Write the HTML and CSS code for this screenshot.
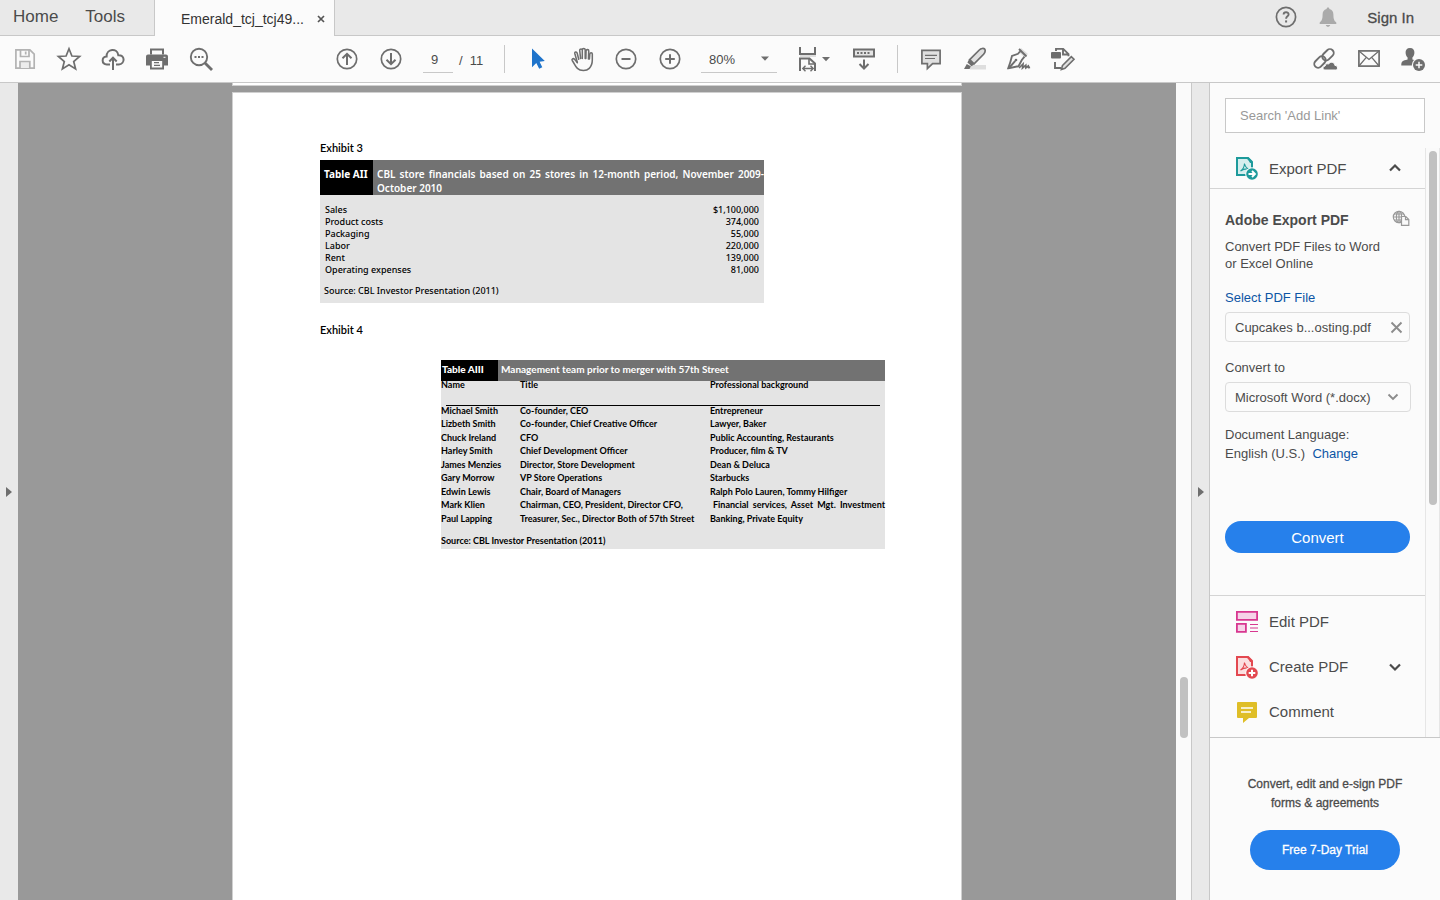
FILE: index.html
```html
<!DOCTYPE html>
<html lang="en">
<head>
    <meta charset="UTF-8">
    <meta name="viewport" content="width=device-width, initial-scale=1.0">
    <title>Emerald_tcj_tcj49...</title>
    <link rel="stylesheet" href="styles.css">
</head>
<body>
    <header class="tabbar">
        <nav class="main-nav">
            <a href="#">Home</a>
            <a href="#">Tools</a>
        </nav>
        <div class="tab">
            <span>Emerald_tcj_tcj49...</span>
            <button class="tab-close" aria-label="Close tab">
                <svg width="8" height="8" viewBox="0 0 8 8"><path d="M1 1l6 6M7 1L1 7" stroke="#555" stroke-width="1.7"/></svg>
            </button>
        </div>
        <div class="account">
            <button aria-label="Help">
                <svg width="22" height="22" viewBox="0 0 22 22" fill="none" stroke="#6e6e6e"><circle cx="11" cy="11" r="9.6" stroke-width="1.7"/><path d="M8.6 8.6c0-3.2 5-3.1 5-.2 0 1.9-2.5 1.9-2.5 4.3" stroke-width="1.9"/><path d="M11.1 14.4v2.1" stroke-width="2"/></svg>
            </button>
            <button aria-label="Notifications">
                <svg width="18" height="20" viewBox="0 0 18 20" fill="#aaa"><path d="M9 0.5c1 0 1.4.6 1.4 1.5C13.200 2.700 14.400 4.800 14.400 7.500c0 4.700.8 6.200 2.900 8v1.500H.7v-1.500c2.100-1.800 2.900-3.300 2.900-8 0-2.700 1.200-4.800 4-5.500C7.600 1.100 8 .5 9 .5zM6.800 18h4.400c-.3 1.200-1.100 1.800-2.200 1.800S7.100 19.200 6.800 18z"/></svg>
            </button>
            <a class="sign-in" href="#">Sign In</a>
        </div>
    </header>

    <div class="toolbar">
        <div class="group group-file">
            <button aria-label="Save">
                <svg width="24" height="24" viewBox="0 0 24 24" fill="none" stroke="#b3b3b3" stroke-width="1.7"><path d="M2.900 2.900h14l4.300 4.300v14H2.900z"/><path d="M7.500 3v6.500h8.500V3M12.700 4.500v3"/><path d="M7 21v-6.500h9.800V21" fill="#ececec"/></svg>
            </button>
            <button aria-label="Star">
                <svg width="26" height="26" viewBox="0 0 26 26" fill="none" stroke="#6e6e6e" stroke-width="1.7"><path d="M13 2.800l2.900 7.200 7.700.5-5.900 5 1.900 7.500-6.600-4.200L6.400 23l1.900-7.500-5.900-5 7.700-.5z"/></svg>
            </button>
            <button aria-label="Upload">
                <svg width="24" height="24" viewBox="0 0 24 24" fill="none" stroke="#6e6e6e" stroke-width="2"><path d="M9 17.500H5.800c-5.500-.3-5.500-7.500-.2-7.900C5.300 1.500 16.500.8 17.300 8.200c6.700-.6 7.200 8.700.5 9.300H15"/><path d="M12 23V11M8.300 14.500L12 10.700l3.700 3.800"/></svg>
            </button>
            <button aria-label="Print">
                <svg width="24" height="24" viewBox="0 0 24 24"><path d="M5 1.500h14v6H5z" fill="#6e6e6e"/><path d="M7 3.500h10v5H7z" fill="#fafafa"/><path d="M3 7.500h18a2 2 0 0 1 2 2v9H1v-9a2 2 0 0 1 2-2z" fill="#6e6e6e"/><path d="M5.900 13h12.200v8.500H5.900z" fill="#fafafa" stroke="#6e6e6e" stroke-width="1.8"/><path d="M9 15.700h5M9 18.300h6" stroke="#6e6e6e" stroke-width="1.200"/><path d="M18.500 10.300h2" stroke="#fafafa"/></svg>
            </button>
            <button aria-label="Search">
                <svg width="26" height="26" viewBox="0 0 26 26" fill="none" stroke="#6e6e6e"><circle cx="11" cy="11" r="8.200" stroke-width="1.900"/><path d="M17 17l7 7" stroke-width="2.800"/><path d="M6.500 11h2M10 11h2M13.500 11h2" stroke-width="2"/></svg>
            </button>
        </div>
        <div class="group">
            <button aria-label="Previous page">
                <svg width="24" height="24" viewBox="0 0 24 24" fill="none" stroke="#6e6e6e" stroke-width="2"><circle cx="12" cy="12" r="9.700" stroke-width="1.700"/><path d="M12 18V7M7.500 11.300L12 6.800l4.500 4.500"/></svg>
            </button>
            <button aria-label="Next page">
                <svg width="24" height="24" viewBox="0 0 24 24" fill="none" stroke="#6e6e6e" stroke-width="2"><circle cx="12" cy="12" r="9.700" stroke-width="1.700"/><path d="M12 6v11M7.500 12.700l4.500 4.500 4.500-4.500"/></svg>
            </button>
        </div>
        <div class="page-number">
            <input type="text" value="9" aria-label="Page number">
            <span>/&nbsp; 11</span>
        </div>
        <div class="separator"></div>
        <div class="group">
            <button aria-label="Select">
                <svg width="24" height="24" viewBox="0 0 24 24"><path d="M6 1.500v18.800l4.300-4.200 2.900 5.700 3.100-1.500-2.700-5.600 5.200-.7z" fill="#1f74cb"/></svg>
            </button>
            <button aria-label="Hand">
                <svg width="25" height="25" viewBox="0 0 26 26" fill="none" stroke="#6e6e6e" stroke-width="1.600" stroke-linecap="round" stroke-linejoin="round"><path d="M7.600 16.200L4.500 12.600c-1.200-1.300-3 .1-2.200 1.400 2.600 3.600 3 6 5.400 8.200 3 2.800 9.400 3 12.300 0 2.500-2.600 3.200-5 3.200-8.700V7.200c0-1.700-2.400-1.700-2.600 0l-.4 5.300"/><path d="M9.100 12.700L7.400 6.300C6.900 4.500 4.600 5 5 6.800l2.600 9.400M12.800 12V3.500c0-1.900-2.700-1.900-2.700 0l.9 8.500M12.800 4V3c0-2 3-2 3 0v9M16.500 12l.2-8c.2-1.800 2.900-1.700 2.800.2L19.200 12.500"/></svg>
            </button>
            <button aria-label="Zoom out">
                <svg width="24" height="24" viewBox="0 0 24 24" fill="none" stroke="#6e6e6e"><circle cx="12" cy="12" r="9.700" stroke-width="1.700"/><path d="M7.500 12h9" stroke-width="2"/></svg>
            </button>
            <button aria-label="Zoom in">
                <svg width="24" height="24" viewBox="0 0 24 24" fill="none" stroke="#6e6e6e"><circle cx="12" cy="12" r="9.700" stroke-width="1.700"/><path d="M7.200 12h9.600M12 7.200v9.600" stroke-width="2"/></svg>
            </button>
        </div>
        <div class="zoom-level">
            <select aria-label="Zoom level">
                <option>80%</option>
            </select>
            <svg width="8" height="5" viewBox="0 0 8 5"><path d="M0 .5h8L4 4.800z" fill="#6e6e6e"/></svg>
        </div>
        <div class="group">
            <button class="wide" aria-label="Page fit">
                <svg width="36" height="28" viewBox="0 0 36 28" fill="none" stroke="#6e6e6e" stroke-width="2"><path d="M4 9h16v3H4z" fill="#dedede" stroke="none"/><path d="M4 2v7h15V2M4 26V13.500h9.500l5.500 5V26"/><path d="M13 13.500v5.500h6" stroke-width="1.600"/><path d="M7 23.500h10M9.500 20.800l-2.700 2.700 2.700 2.700M14.500 20.800l2.700 2.700-2.700 2.700" stroke-width="1.400"/><path d="M26 12h8l-4 4.300z" fill="#6e6e6e" stroke="none"/></svg>
            </button>
            <button aria-label="Read mode">
                <svg width="24" height="24" viewBox="0 0 24 24" fill="none" stroke="#6e6e6e" stroke-width="2"><path d="M2 2.500h20v7H2z" fill="#e4e4e4"/><path d="M5 6h2M8.500 6h2M12 6h2M15.500 6h2" stroke-width="1.800"/><path d="M12 12.500V21M7.500 17l4.500 4.500 4.500-4.500"/></svg>
            </button>
        </div>
        <div class="separator"></div>
        <div class="group">
            <button aria-label="Comment">
                <svg width="24" height="24" viewBox="0 0 24 24" fill="#e0e0e0" stroke="#6e6e6e" stroke-width="1.700"><path d="M2.900 3.400h18.200v13.200h-7.500l-5.200 5v-5H2.900z"/><path d="M6 8.400h12M6 11.500h10" stroke-width="1.200"/></svg>
            </button>
            <button aria-label="Highlight">
                <svg width="24" height="24" viewBox="0 0 24 24"><path d="M7 18h16v4.500H7z" fill="#dedede"/><path d="M6.700 12.700L16.300 3c1.700-1.700 4.300-1.900 5.300-1 .9 1.100.5 3.300-1 5.300l-9.500 9.500z" fill="#e0e0e0" stroke="#6e6e6e" stroke-width="1.700"/><path d="M6 12.500l5.300 4.800-2.700 2-4.200-3.800zM3.800 17l4 2.300L6.600 22H1z" fill="#6e6e6e"/></svg>
            </button>
            <button aria-label="Sign">
                <svg width="26" height="26" viewBox="0 0 26 26" fill="none" stroke="#6e6e6e" stroke-width="1.900"><path d="M15 2l7 6-3.500 3.500-6-6z" fill="#dedede" stroke="none"/><path d="M13 3l7.500 7.500M14 5.500l-2 2.300-6 2.100c-1 4.200-2.200 8.300-3.700 12.300 3.400-.4 6.800-1 10.200-2l3.300-6.200 2.700-3.300"/><path d="M3 22l6.300-7.200"/><circle cx="10" cy="14" r="1.300" fill="#6e6e6e" stroke="none"/><path d="M13 22l4-4-.5 4 3.300-2.700.1 2.500 2.400-1.800.3 1.500 1.500-.2" stroke-width="1.700"/></svg>
            </button>
            <button aria-label="Fill and sign">
                <svg width="26" height="26" viewBox="0 0 26 26" fill="none" stroke="#6e6e6e" stroke-width="1.900"><path d="M6 5V2.900h7.200l5.300 5.300v2M13 3v5.500h5.500M5 16v6h6"/><rect x="1" y="6" width="10" height="6.500" rx="1" fill="#6e6e6e" stroke="none"/><path d="M12.500 19.500l8.800-8.800 2.700 2.500-9 9-3.600 1.200z" fill="#e0e0e0" stroke-width="1.600"/></svg>
            </button>
        </div>
        <div class="group group-share">
            <button aria-label="Share link">
                <svg width="26" height="26" viewBox="0 0 26 26" fill="none" stroke="#6e6e6e" stroke-width="1.900"><rect x="9.500" y="5" width="13" height="7.600" rx="3.800" transform="rotate(-45 16 8.800)"/><rect x="1.500" y="12.200" width="13" height="7.600" rx="3.800" transform="rotate(-45 8 16)"/><path d="M12.800 24c-2.400-.1-2.400-3.800.3-4 .3-2 2-2.600 3.400-1.900 1.600-3.100 6.200-2.100 6.300 1.200 3.400.2 3.600 4.500 1 4.700z" fill="#6e6e6e" stroke="#fbfbfb" stroke-width="1"/></svg>
            </button>
            <button aria-label="Email">
                <svg width="24" height="24" viewBox="0 0 24 24" fill="none" stroke="#6e6e6e"><rect x="1.900" y="3.900" width="20.200" height="15.200" stroke-width="1.700"/><path d="M2 4l10 8.500L22 4M2 19l7.300-8.600M22 19l-7.300-8.600" stroke-width="1.300"/></svg>
            </button>
            <button aria-label="Add people">
                <svg width="26" height="26" viewBox="0 0 26 26"><path d="M10 2c3.200 0 4.600 2 4.400 5-.2 2.300-1 3.500-2 4.500v2c2.300.8 4 1 5 2.300l-3 3.700H1.300c0-4.600 1.400-4.700 6.300-6v-2C6.600 10.500 5.800 9.300 5.600 7 5.400 4 6.800 2 10 2z" fill="#6e6e6e"/><circle cx="19" cy="19" r="7.200" fill="#fafafa"/><circle cx="19" cy="19" r="6" fill="#6e6e6e"/><path d="M15.700 19h6.600M19 15.700v6.600" stroke="#fafafa" stroke-width="1.500"/></svg>
            </button>
        </div>
    </div>

    <main class="workspace">
        <button class="rail rail-left" aria-label="Show navigation pane">
            <svg width="6" height="10" viewBox="0 0 6 10"><path d="M0 0l6 5-6 5z" fill="#6e6e6e"/></svg>
        </button>

        <div class="document">
            <div class="page page-previous"></div>
            <article class="page">
                <h2>Exhibit 3</h2>
                <section class="exhibit exhibit-financials">
                    <div class="exhibit-head">
                        <strong>Table AII</strong>
                        <p>CBL store financials based on 25 stores in 12-month period, November 2009-October 2010</p>
                    </div>
                    <table>
                        <tr><td>Sales</td><td>$1,100,000</td></tr>
                        <tr><td>Product costs</td><td>374,000</td></tr>
                        <tr><td>Packaging</td><td>55,000</td></tr>
                        <tr><td>Labor</td><td>220,000</td></tr>
                        <tr><td>Rent</td><td>139,000</td></tr>
                        <tr><td>Operating expenses</td><td>81,000</td></tr>
                    </table>
                    <p class="source">Source: CBL Investor Presentation (2011)</p>
                </section>

                <h2>Exhibit 4</h2>
                <section class="exhibit exhibit-team">
                    <div class="exhibit-head">
                        <strong>Table AIII</strong>
                        <p>Management team prior to merger with 57th Street</p>
                    </div>
                    <table>
                        <thead>
                            <tr><th class="col-name">Name</th><th class="col-title">Title</th><th>Professional background</th></tr>
                        </thead>
                        <tbody>
                            <tr><td>Michael Smith</td><td>Co-founder, CEO</td><td>Entrepreneur</td></tr>
                            <tr><td>Lizbeth Smith</td><td>Co-founder, Chief Creative Officer</td><td>Lawyer, Baker</td></tr>
                            <tr><td>Chuck Ireland</td><td>CFO</td><td>Public Accounting, Restaurants</td></tr>
                            <tr><td>Harley Smith</td><td>Chief Development Officer</td><td>Producer, film &amp; TV</td></tr>
                            <tr><td>James Menzies</td><td>Director, Store Development</td><td>Dean &amp; Deluca</td></tr>
                            <tr><td>Gary Morrow</td><td>VP Store Operations</td><td>Starbucks</td></tr>
                            <tr><td>Edwin Lewis</td><td>Chair, Board of Managers</td><td>Ralph Polo Lauren, Tommy Hilfiger</td></tr>
                            <tr><td>Mark Klien</td><td>Chairman, CEO, President, Director CFO,</td><td class="justified">Financial services, Asset Mgt. Investment</td></tr>
                            <tr><td>Paul Lapping</td><td>Treasurer, Sec., Director Both of 57th Street</td><td>Banking, Private Equity</td></tr>
                        </tbody>
                    </table>
                    <p class="source">Source: CBL Investor Presentation (2011)</p>
                </section>
            </article>
        </div>

        <div class="scrollbar doc-scrollbar"><div class="thumb"></div></div>

        <button class="rail rail-right" aria-label="Hide tools pane">
            <svg width="6" height="10" viewBox="0 0 6 10"><path d="M0 0l6 5-6 5z" fill="#6e6e6e"/></svg>
        </button>

        <aside class="sidebar">
            <div class="search">
                <input type="text" placeholder="Search 'Add Link'" aria-label="Search tools">
            </div>
            <div class="tools">
                <div class="tool-list">
                    <button class="tool tool-open">
                        <svg width="26" height="26" viewBox="0 0 26 26"><path d="M3 3h10.500l4.500 4.500V20H3z" fill="#d5eeee" stroke="#1d9a9b" stroke-width="2"/><path d="M13 2h1.500L19 6.500V8h-3z" fill="#1d9a9b"/><path d="M6.500 16c2-1.300 3.800-4 4-7.500.7 3 2 5 4.500 5.500-3-.4-6 .2-8.500 2z" fill="none" stroke="#1d9a9b" stroke-width="1.100"/><circle cx="18" cy="19" r="6.800" fill="#fafafa"/><circle cx="18" cy="19" r="5.800" fill="#1d9a9b"/><path d="M14.500 19h6M18 16l3 3-3 3" fill="none" stroke="#fff" stroke-width="1.800"/></svg>
                        <span>Export PDF</span>
                        <svg class="chevron" width="14" height="10" viewBox="0 0 14 10"><path d="M2 7.500l5-5 5 5" fill="none" stroke="#4b4b4b" stroke-width="2.200"/></svg>
                    </button>
                    <div class="export-panel">
                        <div class="export-title">
                            <h3>Adobe Export PDF</h3>
                            <svg width="18" height="16" viewBox="0 0 18 16" fill="none" stroke="#999" stroke-width="1.200"><circle cx="7" cy="7" r="5.700"/><ellipse cx="7" cy="7" rx="2.600" ry="5.700"/><path d="M1.300 7h11.400M2.200 4h9.600M2.200 10h9.600M7 1.300v11.400"/><path d="M9.500 6.500h4.300l3 3v5.900H9.500z" fill="#fafafa"/><path d="M13.500 6.500v3.200h3.300"/></svg>
                        </div>
                        <p class="intro">Convert PDF Files to Word<br>or Excel Online</p>
                        <a class="select-file" href="#">Select PDF File</a>
                        <div class="file">
                            <span>Cupcakes b...osting.pdf</span>
                            <button aria-label="Remove file">
                                <svg width="13" height="13" viewBox="0 0 13 13"><path d="M1.500 1.500l10 10M11.500 1.500l-10 10" stroke="#8c8c8c" stroke-width="1.900"/></svg>
                            </button>
                        </div>
                        <label for="format">Convert to</label>
                        <div class="format">
                            <select id="format">
                                <option>Microsoft Word (*.docx)</option>
                            </select>
                            <svg width="12" height="8" viewBox="0 0 12 8"><path d="M1.500 1.500L6 6l4.500-4.500" fill="none" stroke="#8c8c8c" stroke-width="1.900"/></svg>
                        </div>
                        <p class="language">Document Language:<br>English (U.S.)&nbsp; <a href="#">Change</a></p>
                        <button class="pill convert">Convert</button>
                    </div>
                    <button class="tool">
                        <svg width="26" height="26" viewBox="0 0 26 26" fill="#f6d3e8" stroke="#d83790" stroke-width="1.800"><path d="M2.900 2.900h20.200v8H2.900zM2.900 14.900h9v8h-9z"/><path d="M16 15.500h8M16 19h8M16 22.500h8" stroke-width="1.200"/></svg>
                        <span>Edit PDF</span>
                    </button>
                    <button class="tool">
                        <svg width="26" height="26" viewBox="0 0 26 26"><path d="M3 3h10.500l4.500 4.500V21H3z" fill="#fbdfe0" stroke="#e34850" stroke-width="2"/><path d="M13 2h1.500L19 6.500V8h-3z" fill="#e34850"/><path d="M6.500 16c2-1.300 3.800-4 4-7.500.7 3 2 5 4.500 5.500-3-.4-6 .2-8.500 2z" fill="none" stroke="#e34850" stroke-width="1.100"/><circle cx="18" cy="19" r="6.800" fill="#fafafa"/><circle cx="18" cy="19" r="5.800" fill="#e34850"/><path d="M14.700 19h6.600M18 15.700v6.600" fill="none" stroke="#fff" stroke-width="2"/></svg>
                        <span>Create PDF</span>
                        <svg class="chevron" width="14" height="10" viewBox="0 0 14 10"><path d="M2 2.500l5 5 5-5" fill="none" stroke="#4b4b4b" stroke-width="2.200"/></svg>
                    </button>
                    <button class="tool">
                        <svg width="26" height="26" viewBox="0 0 26 26"><path d="M4 3h18a1 1 0 0 1 1 1v14a1 1 0 0 1-1 1h-7l-6 5v-5H4a1 1 0 0 1-1-1V4a1 1 0 0 1 1-1z" fill="#dfbe27"/><path d="M7 9h12M7 13h10" stroke="#fff" stroke-width="1.700"/></svg>
                        <span>Comment</span>
                    </button>
                </div>
                <div class="scrollbar tools-scrollbar"><div class="thumb"></div></div>
            </div>
            <div class="trial">
                <p>Convert, edit and e-sign PDF<br>forms &amp; agreements</p>
                <button class="pill trial-button">Free 7-Day Trial</button>
            </div>
        </aside>
    </main>
</body>
</html>
```
FILE: styles.css
```css
* {
    box-sizing: border-box;
}

body {
    display: flex;
    flex-direction: column;
    height: 100vh;
    margin: 0;
    overflow: hidden;
    font-family: "Liberation Sans", Arial, sans-serif;
    font-size: 13px;
    color: #4b4b4b;
    background-color: #fbfbfb;
}

h2, h3, p {
    margin: 0;
}

button, input, select {
    font: inherit;
    color: inherit;
}

button {
    display: flex;
    align-items: center;
    justify-content: center;
    padding: 0;
    border: 0;
    background: none;
}

a {
    color: #0d55a5;
    text-decoration: none;
}

svg {
    flex: none;
}

/* tab bar */

.tabbar {
    display: flex;
    flex: none;
    height: 36px;
    border-bottom: 1px solid #c8c8c8;
    background-color: #e9e9e9;
}

.main-nav {
    display: flex;
    gap: 27px;
    width: 154px;
    padding: 7px 13px 0;
    font-size: 17px;
    line-height: 20px;
}

.main-nav a {
    color: #4b4b4b;
}

.tab {
    display: flex;
    align-items: center;
    justify-content: space-between;
    width: 181px;
    height: 36px;
    padding: 2px 9px 0 26px;
    border: solid #c8c8c8;
    border-width: 0 1px;
    font-size: 14px;
    color: #333;
    background-color: #fbfbfb;
}

.account {
    display: flex;
    align-items: center;
    gap: 22px;
    margin-left: auto;
    padding-right: 26px;
}

.account button {
    margin-bottom: 2px;
}

.sign-in {
    margin-left: 8px;
    font-size: 15px;
    color: #4b4b4b;
    -webkit-text-stroke: 0.3px #4b4b4b;
}

/* toolbar */

.toolbar {
    display: flex;
    flex: none;
    align-items: center;
    height: 47px;
    padding: 0 5px 0 3px;
    border-bottom: 1px solid #c8c8c8;
}

.group {
    display: flex;
    align-items: center;
}

.group button {
    width: 44px;
    height: 40px;
}

.group .wide {
    width: 56px;
}

.group-file {
    margin-right: 102px;
}

.group-share {
    margin-left: auto;
}

.separator {
    width: 1px;
    height: 28px;
    margin: 0 11px;
    background-color: #c8c8c8;
}

.page-number {
    display: flex;
    align-items: center;
    width: 70px;
    height: 28px;
    margin-left: 10px;
}

.page-number input {
    width: 30px;
    height: 28px;
    margin-right: 6px;
    padding: 2px 8px 0;
    border: 0;
    border-bottom: 1px solid #c8c8c8;
    background: none;
}

.page-number span {
    padding-top: 2px;
}

.zoom-level {
    display: flex;
    align-items: center;
    width: 76px;
    height: 28px;
    margin: 0 9px;
    border-bottom: 1px solid #c8c8c8;
}

.zoom-level select {
    flex: 1;
    height: 28px;
    margin-right: -16px;
    padding: 2px 8px 0;
    border: 0;
    background: none;
    appearance: none;
}

.zoom-level svg {
    margin-right: 8px;
}

/* workspace */

.workspace {
    display: flex;
    flex: 1;
    min-height: 0;
}

.rail {
    flex: none;
    width: 18px;
    background-color: #e9e9e9;
}

.rail-right {
    width: 19px;
    border: solid #c8c8c8;
    border-width: 0 1px;
}

.document {
    display: flex;
    flex: 1;
    flex-direction: column;
    align-items: center;
    gap: 6px;
    overflow: hidden;
    background-color: #999;
}

.page {
    flex: none;
    width: 730px;
    min-height: 900px;
    padding: 48px 0 0 87px;
    border: 1px solid #d0d0d0;
    color: #000;
    background-color: #fff;
}

.page-previous {
    min-height: 3px;
    padding: 0;
    border-top: 0;
}

.page h2 {
    font-family: Lato, sans-serif;
    font-size: 11px;
    font-weight: 600;
    line-height: 14px;
}

.exhibit {
    width: 444px;
    background-color: #e4e4e4;
}

.exhibit table {
    width: 100%;
    border-collapse: collapse;
}

.exhibit td, .exhibit th {
    padding: 0;
    text-align: left;
    white-space: nowrap;
}

.exhibit-head {
    display: flex;
    color: #fff;
    background-color: #727272;
}

.exhibit-head strong {
    background-color: #000;
}

.exhibit-financials {
    margin: 5px 0 20px;
    padding-bottom: 6px;
    font-family: "Noto Sans", sans-serif;
    font-size: 9px;
    font-weight: 500;
    line-height: 12px;
}

.exhibit-financials .exhibit-head {
    height: 35px;
    margin-bottom: 9px;
    font-size: 10px;
    font-weight: 600;
    line-height: 14px;
}

.exhibit-financials strong {
    width: 53px;
    padding: 7px 0 0 4px;
    font-weight: 700;
    white-space: nowrap;
}

.exhibit-financials .exhibit-head p {
    flex: 1;
    padding: 7px 0 0 4px;
    text-align: justify;
}

.exhibit-financials td:first-child {
    padding-left: 5px;
}

.exhibit-financials td:last-child {
    padding-right: 5px;
    text-align: right;
}

.exhibit-financials .source {
    padding: 9px 4px 0;
}

.exhibit-team {
    margin: 23px 0 0 121px;
    padding-bottom: 2px;
    font-family: Lato, sans-serif;
    font-size: 9px;
    font-weight: 700;
    line-height: 13px;
}

.exhibit-team .exhibit-head {
    height: 21px;
    font-size: 10px;
    line-height: 19px;
}

.exhibit-team strong {
    width: 57px;
    padding-left: 1px;
}

.exhibit-team .exhibit-head p {
    padding-left: 3px;
}

.exhibit-team table {
    table-layout: fixed;
    background: linear-gradient(#000, #000) 5px 24px / 434px 1px no-repeat;
}

.exhibit-team th {
    height: 22px;
    line-height: 7px;
    vertical-align: top;
}

.exhibit-team .col-name {
    width: 79px;
}

.exhibit-team .col-title {
    width: 190px;
}

.exhibit-team tbody tr {
    height: 14px;
}

.exhibit-team tbody tr:nth-child(even) {
    height: 13px;
}

.exhibit-team .justified {
    padding-left: 3px;
    text-align: justify;
    text-align-last: justify;
}

.exhibit-team .source {
    padding-top: 9px;
}

/* scrollbars */

.scrollbar {
    flex: none;
    width: 15px;
    padding: 0 3px;
    background-color: #fafafa;
}

.thumb {
    width: 8px;
    border-radius: 4px;
    background-color: #c1c1c1;
}

.doc-scrollbar {
    padding: 594px 3px 0 4px;
}

.doc-scrollbar .thumb {
    height: 61px;
}

.tools-scrollbar {
    padding-top: 3px;
    border: solid #e6e6e6;
    border-width: 0 1px;
}

.tools-scrollbar .thumb {
    height: 354px;
}

/* sidebar */

.sidebar {
    display: flex;
    flex: none;
    flex-direction: column;
    width: 230px;
}

.search {
    padding: 15px;
}

.search input {
    width: 100%;
    height: 35px;
    padding: 0 14px;
    border: 1px solid #c8c8c8;
    background-color: #fff;
}

.search input::placeholder {
    color: #999;
}

.tools {
    display: flex;
    flex: 1;
    min-height: 0;
}

.tool-list {
    flex: 1;
}

.tool {
    justify-content: flex-start;
    gap: 9px;
    width: 100%;
    height: 45px;
    padding: 0 23px 0 24px;
    font-size: 15px;
}

.tool-open {
    height: 41px;
    border-bottom: 1px solid #d4d4d4;
}

.chevron {
    margin-left: auto;
}

.export-panel {
    height: 407px;
    margin-bottom: 3px;
    padding: 21px 15px 0;
    border-bottom: 1px solid #d4d4d4;
}

.export-title {
    display: flex;
    justify-content: space-between;
    height: 28px;
}

.export-title h3 {
    font-size: 14px;
    line-height: 20px;
}

.intro {
    line-height: 17px;
}

.select-file {
    display: block;
    margin: 17px 0 6px;
    line-height: 17px;
}

.file, .format {
    display: flex;
    align-items: center;
    height: 30px;
    border: 1px solid #dcdcdc;
    border-radius: 4px;
}

.file {
    justify-content: space-between;
    margin-bottom: 17px;
    padding: 0 6px 0 9px;
}

.export-panel label {
    display: block;
    margin-bottom: 6px;
    line-height: 17px;
}

.format {
    margin: 0 -1px 13px 0;
    padding-right: 11px;
}

.format select {
    flex: 1;
    height: 28px;
    margin-right: -12px;
    padding: 0 9px;
    border: 0;
    background: none;
    appearance: none;
}

.language {
    margin-bottom: 58px;
    line-height: 19px;
}

.pill {
    border-radius: 20px;
    color: #fff;
    background-color: #2680eb;
}

.convert {
    width: 100%;
    height: 32px;
    font-size: 15px;
}

.trial {
    display: flex;
    flex: none;
    flex-direction: column;
    align-items: center;
    gap: 17px;
    height: 163px;
    padding-top: 37px;
    border-top: 1px solid #c8c8c8;
    font-size: 12px;
    line-height: 19px;
    text-align: center;
    -webkit-text-stroke: 0.3px #4b4b4b;
}

.trial-button {
    width: 150px;
    height: 40px;
    -webkit-text-stroke: 0.3px #fff;
}
```
